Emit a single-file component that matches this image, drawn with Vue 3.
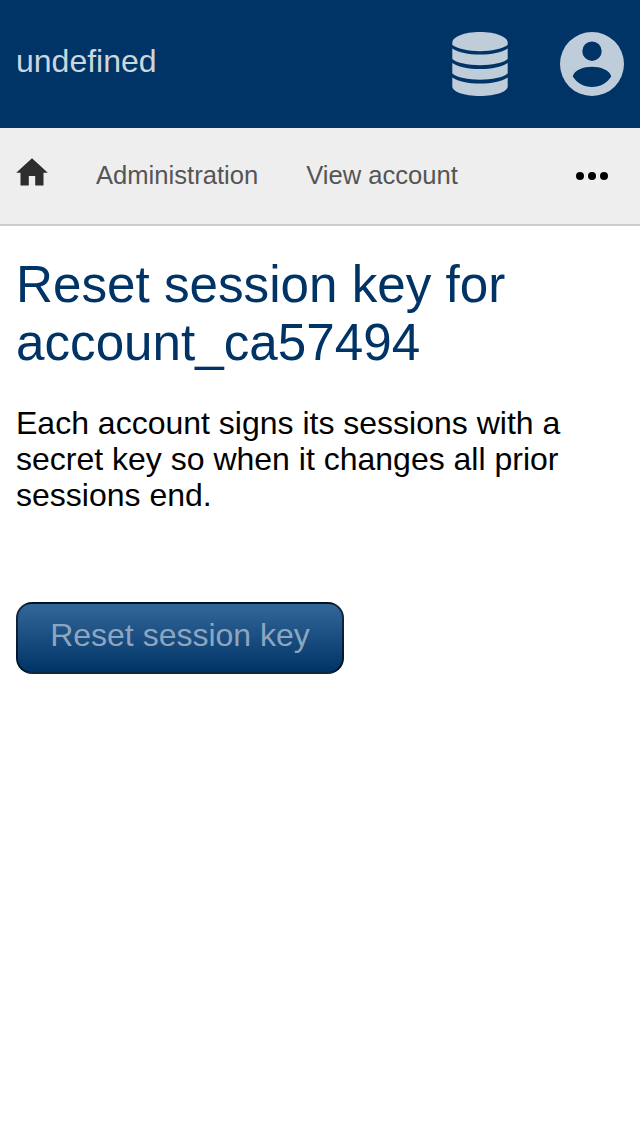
<script setup>
const links = ['Administration', 'View account']
</script>

<template>
  <div class="page">
    <header class="header">
      <span class="brand">undefined</span>
      <div class="icons">
        <svg width="64" height="64" viewBox="0 0 64 64" fill="#bfccd9">
          <path d="M4.300 10.500C4.300 5 16 0 32 0S59.700 5 59.700 10.500V13C53 17 44 19.200 32 19.200S11 17 4.300 13Z" />
          <path d="M4.300 16.500C11 20.500 20 22.500 32 22.500S53 20.500 59.700 16.500V27C55 31 44 33.200 32 33.200S9 31 4.300 27Z" />
          <path d="M4.300 31C11 35 20 37 32 37S53 35 59.700 31V41.500C55 45.500 44 47.700 32 47.700S9 45.500 4.300 41.500Z" />
          <path d="M4.300 45.500C11 49.500 20 51.500 32 51.500S53 49.500 59.700 45.500V54.500C59.700 59.500 48 64 32 64S4.300 59.500 4.300 54.500Z" />
        </svg>
        <svg width="64" height="64" viewBox="0 0 64 64" fill="#bfccd9">
          <path fill-rule="evenodd" d="M32 0A32 32 0 1 1 32 64A32 32 0 1 1 32 0ZM32 9.500A9.700 9.700 0 1 0 32 28.900A9.700 9.700 0 1 0 32 9.500ZM12.800 44.500C17 51 24 55 32 55S47 51 51.200 44.500C50 38 40 34.800 32 34.800S14 38 12.800 44.500Z" />
        </svg>
      </div>
    </header>
    <nav class="nav">
      <svg class="home" width="32" height="28" viewBox="0 0 32 28" fill="#2e2e2e">
        <path d="M16 .3L31.800 14.800H27.500V27.500H19.200V18H12.800V27.500H4.500V14.800H.2Z" />
      </svg>
      <span v-for="link in links" :key="link" class="link">{{ link }}</span>
      <svg class="more" width="32" height="8" viewBox="0 0 32 8">
        <circle cx="4" cy="4" r="4" /><circle cx="16" cy="4" r="4" /><circle cx="28" cy="4" r="4" />
      </svg>
    </nav>
    <main class="main">
      <h1>Reset session key for account_ca57494</h1>
      <p>Each account signs its sessions with a secret key so when it changes all prior sessions end.</p>
      <button type="button">Reset session key</button>
    </main>
  </div>
</template>

<style>
body {
  background: #fff;
}
</style>

<style scoped>
.page {
  min-height: 1136px;
  font-family: "Liberation Sans", Arial, sans-serif;
  font-size: 32px;
  color: #000;
}
.header {
  box-sizing: border-box;
  height: 128px;
  padding: 0 16px;
  display: flex;
  align-items: center;
  justify-content: space-between;
  background: #036;
}
.brand {
  color: #ccd6dd;
  line-height: 36px;
  padding-bottom: 6px;
}
.icons {
  display: flex;
  gap: 48px;
}
.icons svg {
  display: block;
}
.nav {
  box-sizing: border-box;
  height: 98px;
  padding: 0 32px 0 16px;
  display: flex;
  align-items: center;
  gap: 48px;
  background: #eee;
  border-bottom: 2px solid #ccc;
}
.home {
  margin-bottom: 8px;
}
.link {
  font-size: 25.6px;
  line-height: 30px;
  padding-bottom: 2px;
  color: #555;
}
.more {
  margin-left: auto;
}
.main {
  padding: 30px 16px 0;
}
h1 {
  margin: 0;
  font-size: 51.2px;
  line-height: 58px;
  font-weight: 400;
  color: #036;
}
p {
  margin: 33px 0 0;
  line-height: 36px;
}
button {
  display: block;
  box-sizing: border-box;
  width: 328px;
  height: 72px;
  margin: 89px 0 0;
  padding: 0 0 6px;
  border: 2px solid rgba(0, 0, 0, 0.6);
  border-radius: 16px;
  background: linear-gradient(#369, #036);
  color: #8ca6c0;
  font: inherit;
}
</style>
